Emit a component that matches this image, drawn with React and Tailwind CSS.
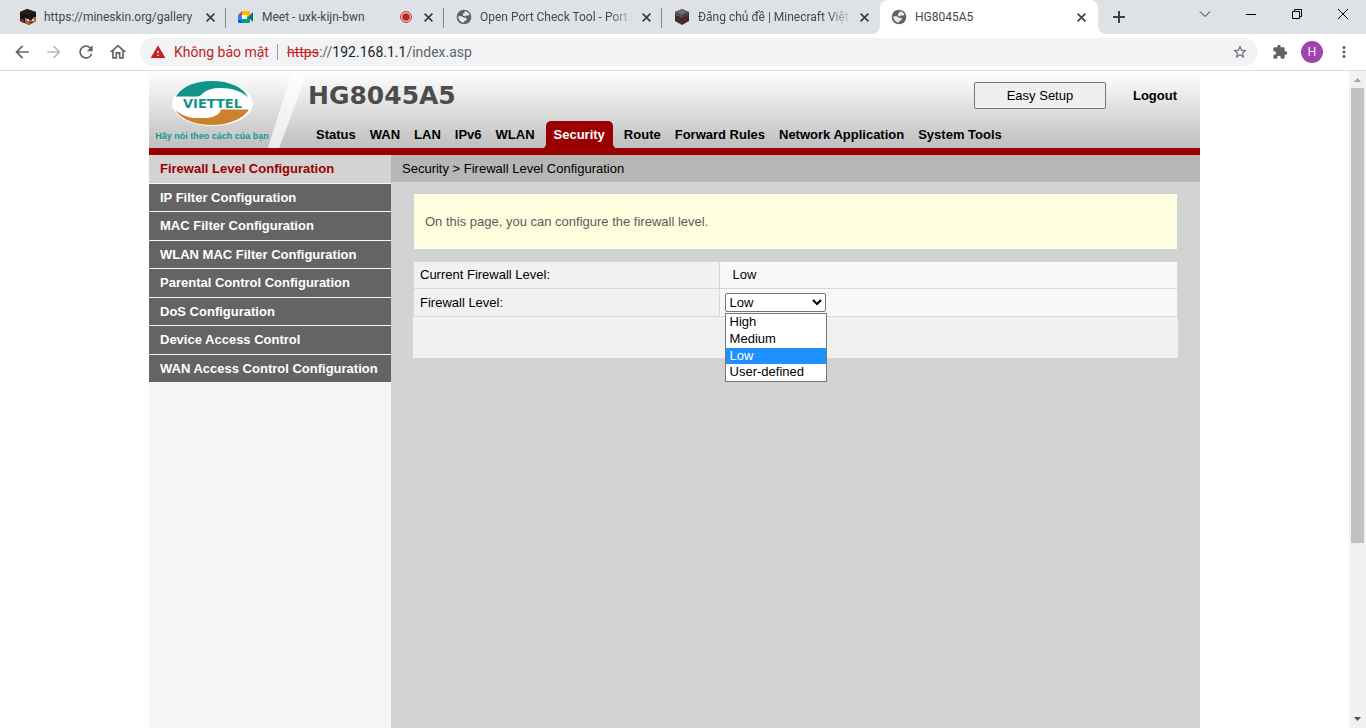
import React, { useState } from 'react';
import {
  MdArrowBack,
  MdArrowForward,
  MdRefresh,
  MdOutlineHome,
  MdWarning,
  MdStarBorder,
  MdExtension,
  MdMoreVert,
} from 'react-icons/md';

const menuItems = [
  'Status',
  'WAN',
  'LAN',
  'IPv6',
  'WLAN',
  'Security',
  'Route',
  'Forward Rules',
  'Network Application',
  'System Tools',
];

const sideItems = [
  'Firewall Level Configuration',
  'IP Filter Configuration',
  'MAC Filter Configuration',
  'WLAN MAC Filter Configuration',
  'Parental Control Configuration',
  'DoS Configuration',
  'Device Access Control',
  'WAN Access Control Configuration',
];

const levels = ['High', 'Medium', 'Low', 'User-defined'];

const SkinIcon = () => (
  <svg viewBox="0 0 16 16" className="size-4 shrink-0">
    <path d="M0 3 7 0l9 3v9l-7 4-9-4z" fill="#1c1414" />
    <path d="M0 3 7 0l9 3-9 3z" fill="#2d1d18" />
    <path d="M5 9h2v2h6V8h3v4l-7 4-4-2z" fill="#a5644a" />
    <path d="M7 10h2v2H7zM12 10h2v2h-2z" fill="#e0cfc8" />
    <path d="M9 13h4v1H9z" fill="#5c2c20" />
    <path d="M1 9l3 2v3l-3-1z" fill="#6a3a2a" />
  </svg>
);

const MeetIcon = () => (
  <svg viewBox="0 0 16 16" className="size-4 shrink-0">
    <path d="M0 6l4-4v4z" fill="#ea4335" />
    <path d="M0 6h4v5H0z" fill="#2684fc" />
    <path d="M0 11h4v3H1a1 1 0 0 1-1-1z" fill="#0066da" />
    <path d="M4 2h7a1 1 0 0 1 1 1v5L9 8V6H4z" fill="#ffba00" />
    <path d="M4 10h5V8h3v5a1 1 0 0 1-1 1H4z" fill="#00a08a" />
    <path d="M10 8l5-5v10z" fill="#00796b" />
    <path d="M4 6h5v4H4z" fill="#fff" />
  </svg>
);

const BlockIcon = () => (
  <svg viewBox="0 0 16 16" className="size-4 shrink-0">
    <path d="M1 3l7-3 7 3v9l-7 4-7-4z" fill="#3a2c2b" />
    <path d="M1 3l7-3 7 3-7 3z" fill="#6b6b6b" />
    <path d="M1 3l7 3v3L1 6z" fill="#555" />
    <path d="M8 6l7-3v3L8 9z" fill="#444" />
    <path d="M3 9l2 1v2l-2-1zM10 10l2-1v2l-2 1zM6 12l2 1v2l-2-1zM13 7l1-1v2l-1 1z" fill="#7a2525" />
  </svg>
);

const GlobeIcon = () => (
  <svg viewBox="0 0 16 16" className="size-4 shrink-0">
    <circle cx="8" cy="8" r="7.3" fill="#5f6368" />
    <path d="M8.500 2.200c2.200 0 4.200 1.300 5 3.200l-1 1.100H9.800L8.600 7.600 7 6.400V4.600l1.500-.8z" fill="#e8eaed" />
    <path d="M2.300 7.300h3.600l1.900 1.500h2.100l1.200 1.500-1.400 1.400H8.200v1.900c-3 .2-5.900-2.400-5.900-6.300z" fill="#e8eaed" />
  </svg>
);

const CloseIcon = () => (
  <svg viewBox="0 0 9 9" className="size-[9px]" stroke="#3c4043" strokeWidth="1.700">
    <path d="M.6.6l7.800 7.800M8.400.6L.6 8.400" />
  </svg>
);

const tabs = [
  { title: 'https://mineskin.org/gallery', icon: <SkinIcon /> },
  { title: 'Meet - uxk-kijn-bwn', icon: <MeetIcon />, recording: true },
  { title: 'Open Port Check Tool - Port F', icon: <GlobeIcon />, faded: true },
  { title: 'Đăng chủ đề | Minecraft Việt', icon: <BlockIcon />, faded: true, last: true },
  { title: 'HG8045A5', icon: <GlobeIcon />, active: true },
];

const BrowserTab = ({ title, icon, recording, faded, last, active }) => (
  <div
    className={
      active
        ? 'relative flex h-full w-[218px] items-center gap-2 rounded-t-lg bg-white pr-3 pl-[11px]'
        : 'relative flex h-full w-[218px] items-center gap-2 pr-[11px] pl-3'
    }
  >
    {icon}
    <span
      className={
        faded
          ? 'min-w-0 flex-1 text-[12px] whitespace-nowrap text-[#45484d] [mask-image:linear-gradient(to_right,black_84%,transparent)]'
          : 'min-w-0 flex-1 text-[12px] whitespace-nowrap text-[#45484d]'
      }
    >
      {title}
    </span>
    {recording && (
      <svg viewBox="0 0 12 12" className="mr-1 size-3 shrink-0">
        <circle cx="6" cy="6" r="5.400" fill="none" stroke="#c5221f" />
        <circle cx="6" cy="6" r="3.800" fill="#c5221f" />
      </svg>
    )}
    <button aria-label={`Close ${title}`} className="shrink-0">
      <CloseIcon />
    </button>
    {active && (
      <>
        <svg viewBox="0 0 8 8" className="absolute bottom-0 -left-2 size-2">
          <path d="M8 0v8H0a8 8 0 0 0 8-8z" fill="#fff" />
        </svg>
        <svg viewBox="0 0 8 8" className="absolute -right-2 bottom-0 size-2">
          <path d="M0 0v8h8a8 8 0 0 1-8-8z" fill="#fff" />
        </svg>
      </>
    )}
    {!active && !last && <span className="absolute top-2 right-0 h-5 w-px bg-[#85888d]" />}
  </div>
);

const TabStrip = () => (
  <div className="flex h-[34px] shrink-0 items-center bg-[#dee1e6] pl-2 font-[Roboto,'Noto_Sans',sans-serif]">
    {tabs.map((tab) => (
      <BrowserTab key={tab.title} {...tab} />
    ))}
    <button aria-label="New tab" className="ml-[15px]">
      <svg viewBox="0 0 12 12" className="size-3" stroke="#3c4043" strokeWidth="2">
        <path d="M6 0v12M0 6h12" />
      </svg>
    </button>
    <div className="ml-auto flex h-full items-start">
      <button aria-label="Search tabs" className="flex h-7 w-[46px] items-center justify-center">
        <svg viewBox="0 0 12 12" className="size-3" fill="none" stroke="#222">
          <path d="M1 3.500l5 5 5-5" />
        </svg>
      </button>
      <button aria-label="Minimize" className="flex h-7 w-[46px] items-center justify-center">
        <svg viewBox="0 0 10 10" className="size-[10px]" stroke="#000">
          <path d="M0 5.500h10" />
        </svg>
      </button>
      <button aria-label="Restore" className="flex h-7 w-[46px] items-center justify-center">
        <svg viewBox="0 0 10 10" className="size-[10px]" fill="none" stroke="#000">
          <path d="M.5 2.500h7v7h-7zM2.500 2.500v-2h7v7h-2" />
        </svg>
      </button>
      <button aria-label="Close" className="flex h-7 w-[46px] items-center justify-center">
        <svg viewBox="0 0 10 10" className="size-[10px]" stroke="#000">
          <path d="M0 0l10 10M10 0L0 10" />
        </svg>
      </button>
    </div>
  </div>
);

const Toolbar = () => (
  <div className="flex h-[37px] shrink-0 items-center border-b border-[#dadce0] bg-white pr-[13px] pl-3 text-[#5f6368]">
    <div className="flex gap-3">
      <button aria-label="Back">
        <MdArrowBack className="size-5" />
      </button>
      <button aria-label="Forward" className="text-[#b8babd]">
        <MdArrowForward className="size-5" />
      </button>
      <button aria-label="Reload">
        <MdRefresh className="size-5" />
      </button>
      <button aria-label="Home">
        <MdOutlineHome className="size-5" />
      </button>
    </div>
    <div className="ml-3 flex h-7 min-w-0 flex-1 items-center rounded-full bg-[#f1f3f4] pr-[10px] pl-[10px] font-[Roboto,'Noto_Sans',sans-serif] text-[14px]">
      <MdWarning className="size-4 text-[#c5221f]" />
      <span className="ml-2 text-[#c5221f]">Không bảo mật</span>
      <span className="mr-[9px] ml-2 h-4 w-px bg-[#9a9da1]" />
      <span className="flex-1">
        <span className="text-[#c5221f] line-through">https</span>://
        <span className="text-[#202124]">192.168.1.1</span>/index.asp
      </span>
      <button aria-label="Bookmark this tab">
        <MdStarBorder className="size-4" />
      </button>
    </div>
    <button aria-label="Extensions" className="ml-[14px]">
      <MdExtension className="size-4" />
    </button>
    <button className="ml-[13px] size-[22px] rounded-full bg-[#a142b0] text-[12px] text-white">H</button>
    <button aria-label="Menu" className="ml-3">
      <MdMoreVert className="size-[18px]" />
    </button>
  </div>
);

const ViettelLogo = () => (
  <svg viewBox="0 0 150 77" className="h-[77px] w-[150px] shrink-0 overflow-visible">
    <defs>
      <linearGradient id="slash" x1="0" y1="0" x2="0" y2="1">
        <stop offset="0" stopColor="#fff" />
        <stop offset="1" stopColor="#ebebeb" />
      </linearGradient>
    </defs>
    <path d="M143 0h16l-29 77h-11z" fill="url(#slash)" />
    <ellipse cx="63.500" cy="32.500" rx="40.500" ry="22.500" fill="#fff" />
    <path d="M27 25.500C33 15 47 10 63 10c17 0 31 6 36 16-7-6-17-9-27-9-9 0-14 2-18 5-2 2-3 3.500-6 3.500z" fill="#0f9488" />
    <path d="M72 38.500h28C94 48 80 54 63 54c-16 0-30-5-37-15 5 4 11 7 19 8h13c8-1 13-4 14-8.500z" fill="#cc812d" />
    <text x="63.500" y="36.500" textAnchor="middle" fontSize="13" fontWeight="bold" fill="#0f9488" fontFamily="DejaVu Sans, sans-serif">
      VIETTEL
    </text>
    <text x="63" y="68" textAnchor="middle" fontSize="9" fontWeight="bold" fill="#119a8d" fontFamily="Liberation Sans, sans-serif">
      Hãy nói theo cách của bạn
    </text>
  </svg>
);

const Header = () => (
  <header className="flex h-[84px] border-b-[7px] border-[#990000] bg-linear-to-b from-white to-[#bfbfbf]">
    <ViettelLogo />
    <div className="flex min-w-0 flex-1 flex-col justify-between">
      <div className="flex items-start justify-between pr-[23px] pl-[9px]">
        <h1 className="pt-2 font-['DejaVu_Sans',sans-serif] text-[25px] leading-[34px] font-bold text-[#4c4c4c]">
          HG8045A5
        </h1>
        <div className="flex items-center gap-[27px] pt-[11px]">
          <button className="h-[27px] w-[132px] rounded-[2px] border border-[#767676] bg-[#efefef]">Easy Setup</button>
          <a href="#logout" className="font-bold">
            Logout
          </a>
        </div>
      </div>
      <nav className="flex items-end gap-[14px] pl-[17px] font-bold whitespace-nowrap">
        {menuItems.map((item) =>
          item === 'Security' ? (
            <a key={item} href="#security" className="relative -mx-[3px] rounded-t-[5px] bg-[#990000] px-2 leading-[27px] text-white">
              {item}
              <svg viewBox="0 0 2 3" className="absolute bottom-0 -left-[2px] h-[3px] w-[2px]">
                <path d="M2 0v3H0z" fill="#990000" />
              </svg>
              <svg viewBox="0 0 2 3" className="absolute -right-[2px] bottom-0 h-[3px] w-[2px]">
                <path d="M0 0v3h2z" fill="#990000" />
              </svg>
            </a>
          ) : (
            <a key={item} href={`#${item}`} className="leading-[27px]">
              {item}
            </a>
          )
        )}
      </nav>
    </div>
  </header>
);

const FirewallForm = () => {
  const [level, setLevel] = useState('Low');

  return (
    <div className="px-[22px] pt-[11px]">
      <p className="border border-[#c5d7e0] bg-[#ffffe0] px-[11px] py-[18px] leading-[19px] text-[#5c5c5c]">
        On this page, you can configure the firewall level.
      </p>
      <table className="mt-[11px] w-full border-collapse">
        <tbody>
          <tr>
            <th className="h-[27px] w-[40%] border border-[#d7d7d7] bg-[#f1f1f1] px-[6px] text-left font-normal">
              Current Firewall Level:
            </th>
            <td className="border border-[#d7d7d7] bg-[#f9f9f9] px-[13px]">Low</td>
          </tr>
          <tr>
            <th className="h-7 border border-[#d7d7d7] bg-[#f1f1f1] px-[6px] text-left font-normal">
              <label htmlFor="level">Firewall Level:</label>
            </th>
            <td className="border border-[#d7d7d7] bg-[#f9f9f9] px-[5px]">
              <div className="relative">
                <select
                  id="level"
                  value={level}
                  onChange={(e) => setLevel(e.target.value)}
                  className="block h-[19px] w-[101px] rounded-[2px] border border-[#767676] bg-white text-[13px]"
                >
                  {levels.map((item) => (
                    <option key={item}>{item}</option>
                  ))}
                </select>
                <ul
                  role="listbox"
                  className="absolute top-5 left-0 grid h-[69px] w-[102px] grid-rows-4 border border-[#767676] bg-white leading-[16px]"
                >
                  {levels.map((item) => (
                    <li
                      key={item}
                      role="option"
                      aria-selected={item === level}
                      onClick={() => setLevel(item)}
                      className={item === level ? 'bg-[#1e90ff] px-1 text-white' : 'px-1'}
                    >
                      {item}
                    </li>
                  ))}
                </ul>
              </div>
            </td>
          </tr>
        </tbody>
      </table>
      <div className="h-[41px] bg-[#f1f1f1]" />
    </div>
  );
};

const RouterPage = () => (
  <div className="mx-auto flex w-[1051px] max-w-full flex-col font-['Liberation_Sans',Arial,sans-serif] text-[13px] text-black">
    <Header />
    <div className="flex flex-1">
      <aside className="w-[242px] shrink-0 bg-[#f6f6f6]">
        <nav className="grid h-[228px] grid-rows-8 font-bold">
          {sideItems.map((item, i) => (
            <a
              key={item}
              href={`#side-${i}`}
              className={
                i === 0
                  ? 'flex items-center border-b border-[#f6f6f6] bg-[#d3d3d3] px-[11px] text-[#990000]'
                  : 'flex items-center border-b border-[#f6f6f6] bg-[#646464] px-[11px] whitespace-nowrap text-white'
              }
            >
              {item}
            </a>
          ))}
        </nav>
      </aside>
      <main className="min-w-0 flex-1 bg-[#d3d3d3]">
        <div className="bg-[#b6b6b6] px-[11px] leading-[27px]">Security &gt; Firewall Level Configuration</div>
        <FirewallForm />
      </main>
    </div>
  </div>
);

const Scrollbar = () => (
  <div className="flex w-[17px] shrink-0 flex-col items-center bg-[#f1f1f1]">
    <svg viewBox="0 0 17 17" className="size-[17px] shrink-0">
      <path d="M5 11h7l-3.500-4z" fill="#a3a3a3" />
    </svg>
    <div className="w-full flex-1 px-[2px]">
      <div className="h-[73%] bg-[#c1c1c1]" />
    </div>
    <svg viewBox="0 0 17 17" className="size-[17px] shrink-0">
      <path d="M5 6h7l-3.500 4z" fill="#505050" />
    </svg>
  </div>
);

const App = () => {
  return (
    <div className="flex h-screen flex-col overflow-hidden bg-white font-['Noto_Sans',sans-serif]">
      <TabStrip />
      <Toolbar />
      <div className="flex min-h-0 flex-1">
        <div className="flex min-w-0 flex-1">
          <RouterPage />
        </div>
        <Scrollbar />
      </div>
    </div>
  );
};

export default App;
